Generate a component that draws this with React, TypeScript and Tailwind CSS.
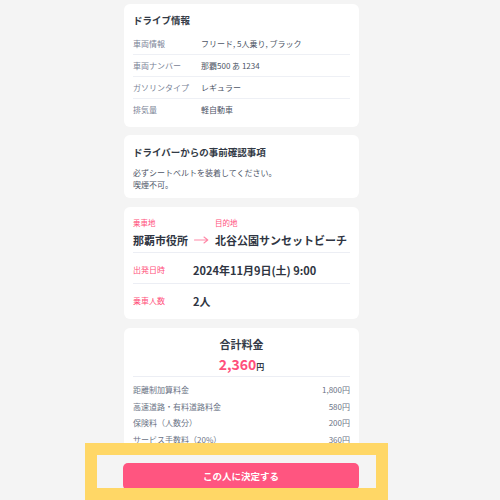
import React from "react";

const font = { fontFamily: '"Noto Sans CJK JP", "Noto Sans", sans-serif' };

function InfoRow({ label, value, last }: { label: string; value: string; last?: boolean }) {
  return (
    <div className={`flex items-center h-[22px] text-[8px] ${last ? "" : "border-b border-[#eef0f5]"}`}>
      <div className="w-[68px] text-[#7a8396]">{label}</div>
      <div className="text-[#4d5566]">{value}</div>
    </div>
  );
}

function FeeRow({ label, value }: { label: string; value: string }) {
  return (
    <div className="flex justify-between items-center h-[16.5px] text-[8px] text-[#6b7385]">
      <span>{label}</span>
      <span>{value}</span>
    </div>
  );
}

export default function App() {
  return (
    <div className="min-h-[500px] w-full bg-[#f4f4f4] relative" style={font}>
      <div className="pl-[124px] pt-[4px] pb-[80px]">
        <div className="w-[235px] flex flex-col">
          {/* Card 1 */}
          <div className="bg-white rounded-[6px] px-[9px] pt-[9px] pb-[6px]">
            <div className="text-[9.5px] font-bold leading-[14px] text-[#333a46] mb-[6px]">ドライブ情報</div>
            <InfoRow label="車両情報" value="フリード, 5人乗り, ブラック" />
            <InfoRow label="車両ナンバー" value="那覇500 あ 1234" />
            <InfoRow label="ガソリンタイプ" value="レギュラー" />
            <InfoRow label="排気量" value="軽自動車" last />
          </div>

          {/* Card 2 */}
          <div className="bg-white rounded-[6px] px-[9px] pt-[10px] pb-[7px] mt-[8px]">
            <div className="text-[9.5px] font-bold leading-[14px] text-[#333a46]">ドライバーからの事前確認事項</div>
            <div className="mt-[8px] text-[8px] leading-[12px] text-[#4d5566]">
              <div>必ずシートベルトを装着してください。</div>
              <div>喫煙不可。</div>
            </div>
          </div>

          {/* Card 3 */}
          <div className="bg-white rounded-[6px] px-[9px] pt-[10px] mt-[9px]">
            <div className="flex items-end border-b border-[#eceef4] pb-[3px]">
              <div className="flex flex-col">
                <span className="text-[7.5px] leading-[12px] text-[#ff4f7b]">乗車地</span>
                <span className="mt-[2px] text-[11px] leading-[18px] font-semibold text-[#2f3542]">那覇市役所</span>
              </div>
              <div className="h-[18px] flex items-center mx-[6px]">
                <svg width="15" height="8" viewBox="0 0 15 8">
                  <path d="M0.5 4 H13.5 M10 1 L13.8 4 L10 7" stroke="#ff8aa8" strokeWidth="1.1" fill="none" strokeLinecap="round" strokeLinejoin="round" />
                </svg>
              </div>
              <div className="flex flex-col">
                <span className="text-[7.5px] leading-[12px] text-[#ff4f7b]">目的地</span>
                <span className="mt-[2px] text-[11px] leading-[18px] font-semibold text-[#2f3542]">北谷公園サンセットビーチ</span>
              </div>
            </div>
            <div className="flex items-center pt-[10px] pb-[6px] border-b border-[#eceef4]">
              <span className="w-[60px] text-[8px] leading-[14px] text-[#ff4f7b]">出発日時</span>
              <span className="text-[11px] leading-[14px] font-semibold text-[#2f3542]">2024年11月9日(土) 9:00</span>
            </div>
            <div className="flex items-center pt-[10px] pb-[11px]">
              <span className="w-[60px] text-[8px] leading-[14px] text-[#ff4f7b]">乗車人数</span>
              <span className="text-[11px] leading-[14px] font-semibold text-[#2f3542]">2人</span>
            </div>
          </div>

          {/* Card 4 */}
          <div className="bg-white rounded-[6px] px-[9px] pt-[9px] pb-[40px] mt-[9px]">
            <div className="text-center text-[11px] font-bold leading-[14px] text-[#333a46]">合計料金</div>
            <div className="flex justify-center items-baseline mt-[4px] h-[18px] leading-[18px]">
              <span className="text-[14px] font-bold text-[#ff4f7b]">2,360</span>
              <span className="text-[8px] font-bold text-[#333a46]">円</span>
            </div>
            <div className="mt-[3px] border-t border-[#eceef4] pt-[5px]">
              <FeeRow label="距離制加算料金" value="1,800円" />
              <FeeRow label="高速道路・有料道路料金" value="580円" />
              <FeeRow label="保険料（人数分）" value="200円" />
              <FeeRow label="サービス手数料（20%）" value="360円" />
              <FeeRow label="合計" value="2,360円" />
            </div>
          </div>
        </div>
      </div>

      {/* Bottom bar */}
      <div className="fixed left-0 right-0 bottom-0 h-[45px] bg-[#f4f4f4]">
        <div className="pl-[123px] pt-[6px]">
          <button className="w-[236px] h-[27px] rounded-[5px] bg-[#ff5580] text-white text-[9.5px] font-bold leading-[27px]" style={font}>
            この人に決定する
          </button>
        </div>
      </div>
      {/* Highlight frame */}
      <div className="fixed left-[85px] top-[443px] w-[303px] h-[57px] border-[12px] border-[#ffd766] pointer-events-none" />
    </div>
  );
}
